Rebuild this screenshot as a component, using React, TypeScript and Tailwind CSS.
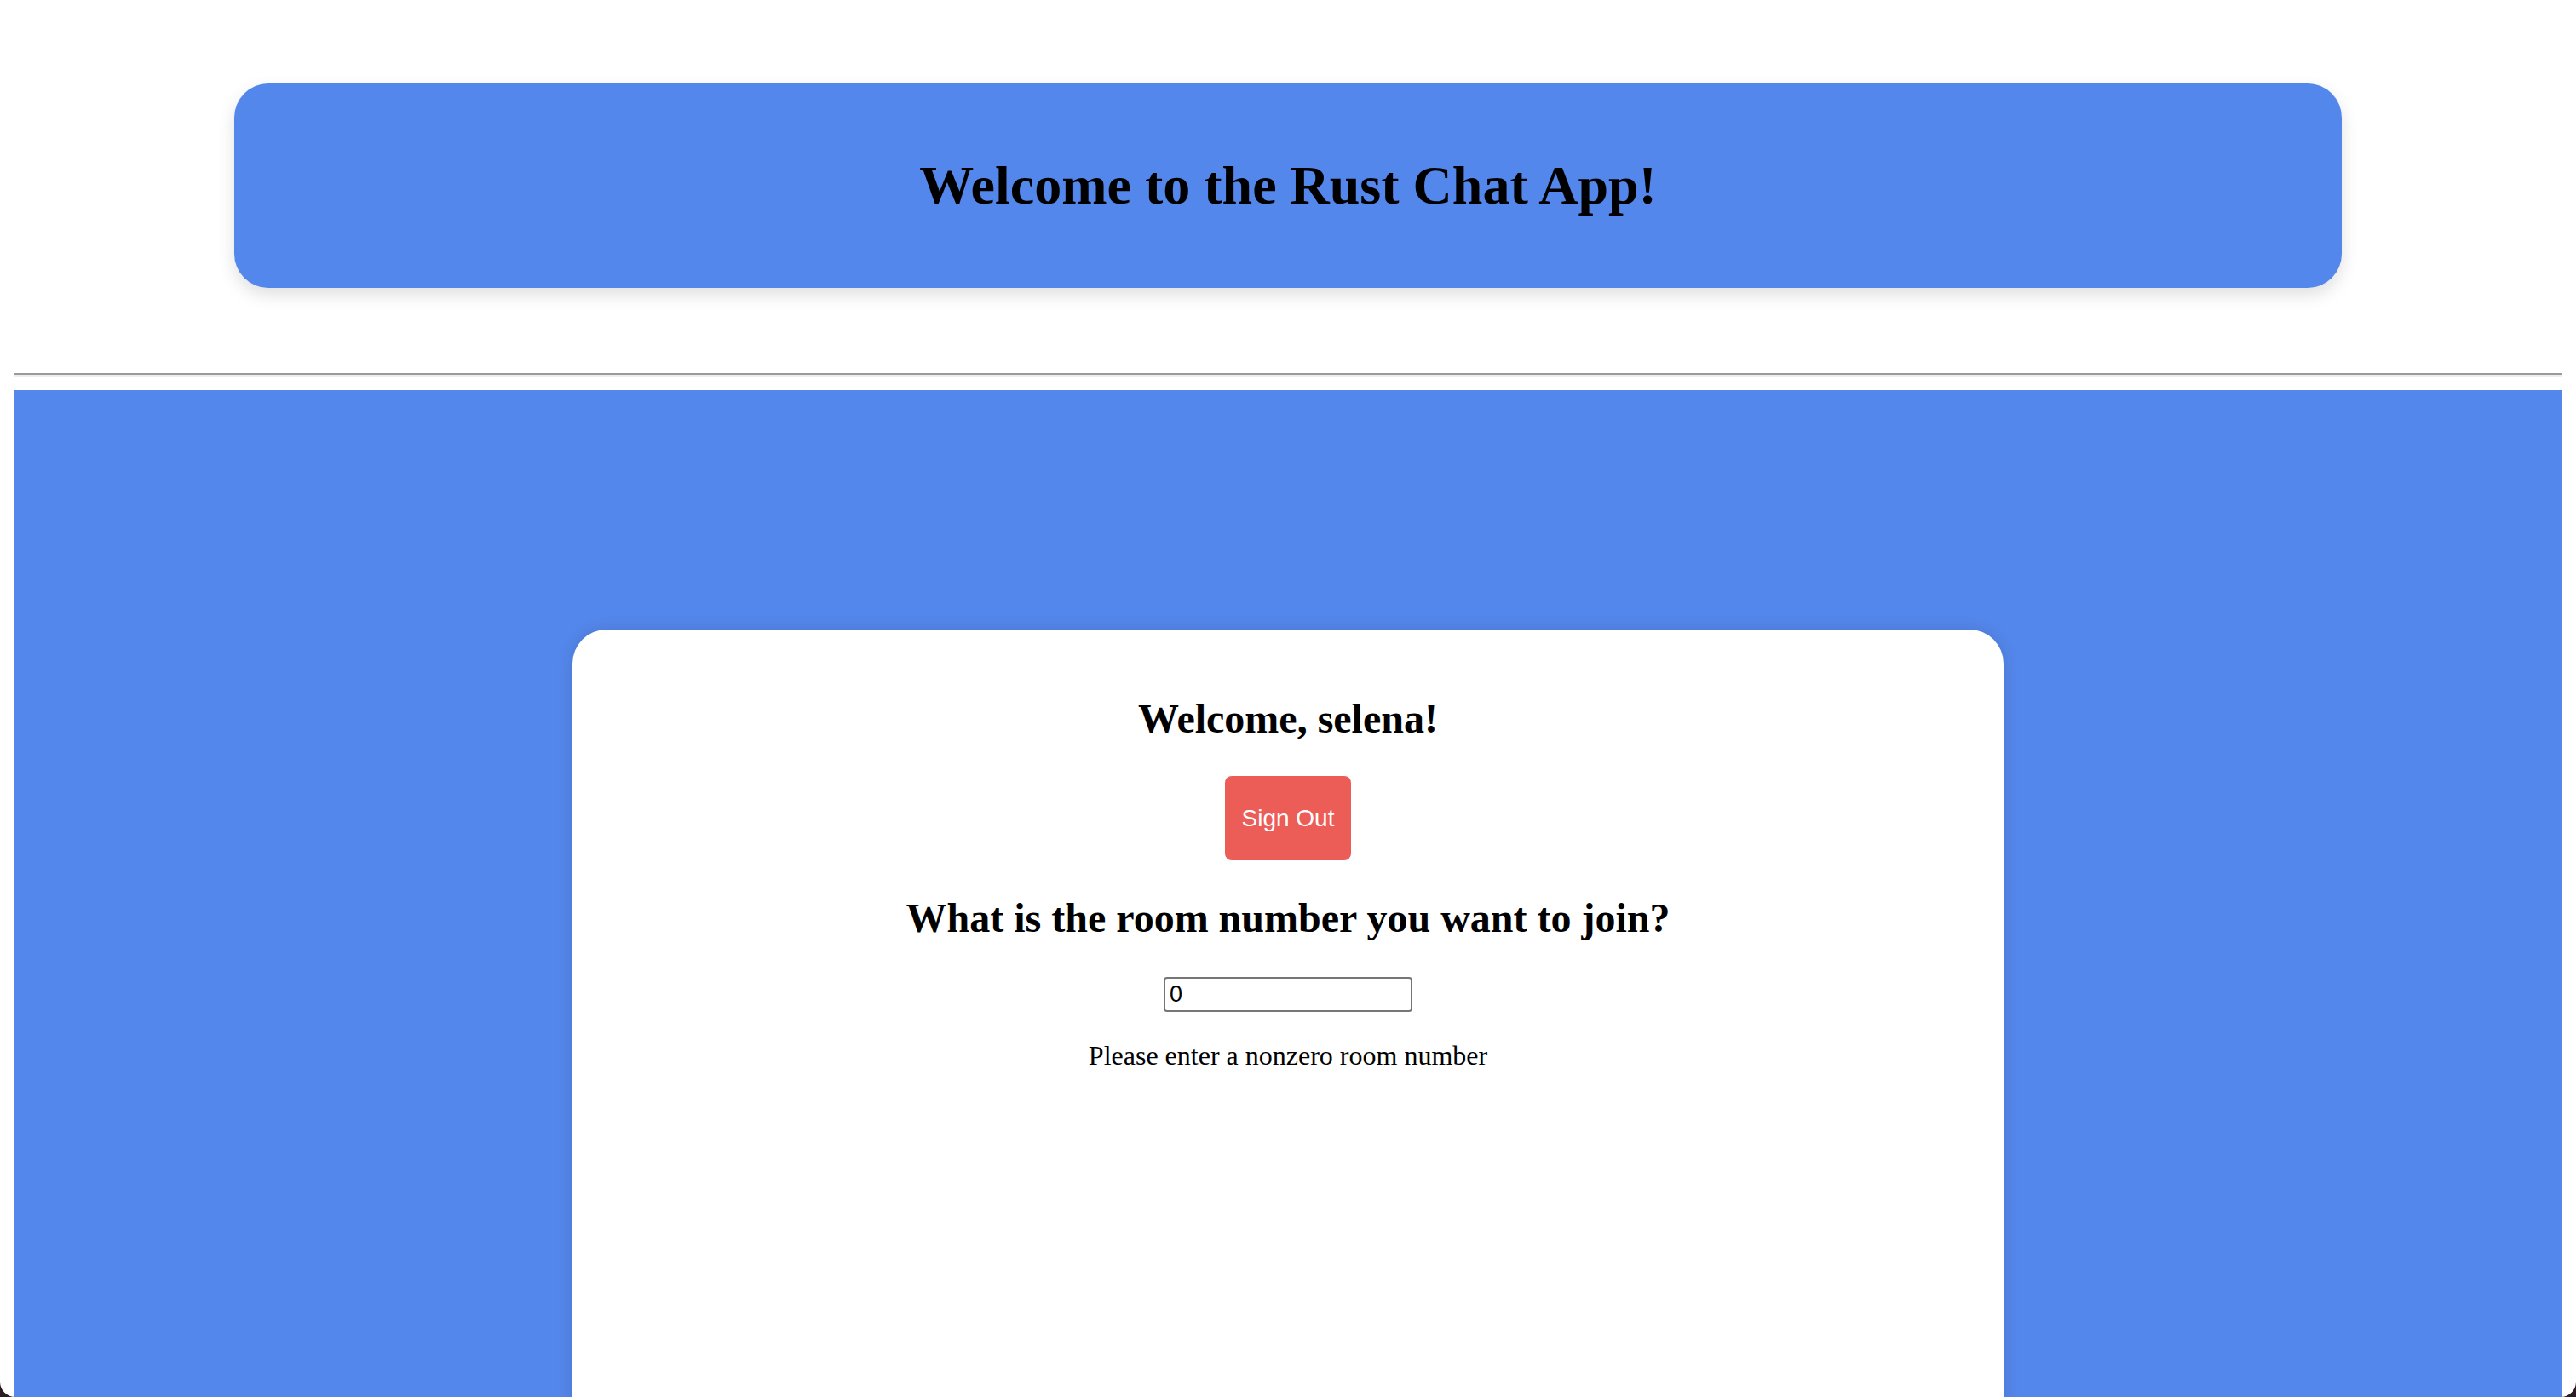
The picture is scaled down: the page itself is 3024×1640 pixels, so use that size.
import type { FC } from 'react';

const WindowCorner: FC<{ side: 'left' | 'right' }> = ({ side }) => (
    <svg
        width="18"
        height="18"
        viewBox="0 0 18 18"
        className={side === 'left' ? 'fixed bottom-0 left-0' : 'fixed bottom-0 right-0'}
    >
        {side === 'left' ? (
            <path d="M0 0 L0 18 L18 18 A18 18 0 0 1 0 0 Z" fill="#2a1b24" />
        ) : (
            <path d="M18 0 L18 18 L0 18 A18 18 0 0 0 18 0 Z" fill="#2a1b24" />
        )}
    </svg>
);

const App: FC = () => {
    return (
        <div className="bg-white text-black font-['Liberation_Serif',_'Times_New_Roman',_serif] h-[1640px] overflow-hidden">
            <div className="px-[16px] pt-[98px]">
                <header className="mx-[259px] h-[240px] rounded-[40px] bg-[#5487eb] shadow-[0_8px_20px_rgba(0,0,0,0.13)] flex items-center justify-center">
                    <h1 className="text-[64px] font-bold leading-normal">Welcome to the Rust Chat App!</h1>
                </header>

                <hr className="mt-[100px] h-0 border-0 border-t-[2px] border-b-[2px] border-t-[#9a9a9a] border-b-[#eeeeee]" />

                <main className="mt-[16px] bg-[#5487eb] pt-[281px] min-h-[1400px]">
                    <section className="w-[1680px] mx-auto min-h-[1200px] bg-white rounded-t-[40px] shadow-[0_0_18px_rgba(0,0,0,0.12)] flex flex-col items-center pt-[69px]">
                        <h2 className="text-[48px] font-bold leading-normal">Welcome, selena!</h2>

                        <button className="mt-[31px] h-[99px] px-[20px] rounded-[8px] bg-[#ec5d57] text-white text-[28px] font-['Liberation_Sans',_Arial,_sans-serif]">
                            Sign Out
                        </button>

                        <h2 className="mt-[32px] text-[48px] font-bold leading-normal">
                            What is the room number you want to join?
                        </h2>

                        <input
                            type="text"
                            defaultValue="0"
                            className="mt-[33px] w-[292px] h-[41px] border-[2px] border-[#767676] rounded-[4px] pl-[5px] text-[27px] font-['Liberation_Sans',_Arial,_sans-serif] bg-white"
                        />

                        <p className="mt-[27px] text-[32px] leading-normal">Please enter a nonzero room number</p>
                    </section>
                </main>
            </div>

            <WindowCorner side="left" />
            <WindowCorner side="right" />
        </div>
    );
};

export default App;
